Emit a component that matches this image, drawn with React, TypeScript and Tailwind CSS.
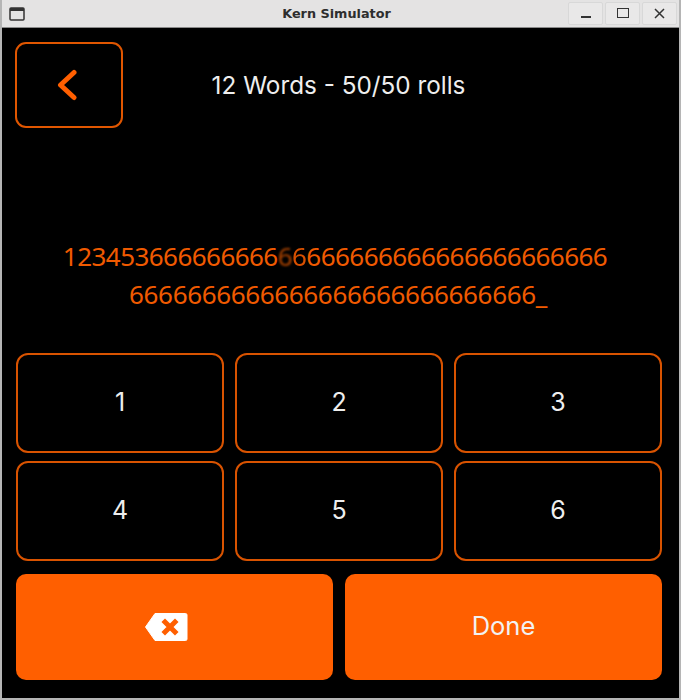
import React from "react";

const numbers = ["1", "2", "3", "4", "5", "6"];

function TitleBar() {
  return (
    <div className="h-[28px] shrink-0 grid grid-cols-[1fr_auto_1fr] items-center bg-[#e4e3e3] border-b border-[#8a8a8a]">
      <div className="pl-[7px] flex">
        <svg width="16" height="14" viewBox="0 0 16 14" fill="none">
          <rect x="1" y="1" width="14" height="12" rx="1" stroke="#333" strokeWidth="1.5" />
          <rect x="1" y="1" width="14" height="3" fill="#333" />
        </svg>
      </div>
      <div className="text-center text-[12.8px] font-bold text-[#2e2e2e] mr-[8px]" style={{ fontFamily: '"DejaVu Sans", sans-serif' }}>
        Kern Simulator
      </div>
      <div className="flex justify-end gap-[2px] pr-[2px] h-[23px] mb-[1px]">
        <div className="w-[35px] flex items-center justify-center bg-[#e9e8e8] border border-[#d8d8d8] rounded-[2px]">
          <div className="w-[10px] h-[2px] bg-[#333] mt-[8px]" />
        </div>
        <div className="w-[35px] flex items-center justify-center bg-[#e9e8e8] border border-[#d8d8d8] rounded-[2px]">
          <div className="w-[12px] h-[10px] border-[1.5px] border-[#333]" />
        </div>
        <div className="w-[35px] flex items-center justify-center bg-[#e9e8e8] border border-[#d8d8d8] rounded-[2px]">
          <svg width="11" height="11" viewBox="0 0 11 11" fill="none">
            <path d="M1 1L10 10M10 1L1 10" stroke="#333" strokeWidth="1.5" />
          </svg>
        </div>
      </div>
    </div>
  );
}

export default function App() {
  return (
    <div
      className="w-[681px] h-[700px] flex flex-col bg-black border-x-2 border-b-2 border-[#b5b5b5] overflow-hidden"
      style={{ fontFamily: '"Inter", "Noto Sans", sans-serif' }}
    >
      <TitleBar />
      <div className="flex-1 flex flex-col pl-[14px] pr-[17px] pt-[14px] pb-[18px] min-h-0">
        <div className="flex items-center h-[86px] shrink-0 -ml-px">
          <div className="w-[108px] h-[86px] flex items-center justify-center border-2 border-[#e05600] rounded-[11px]">
            <svg width="24" height="32" viewBox="0 0 24 32" fill="none">
              <path d="M17 3.5L3.5 16L17 28.5" stroke="#ff5f00" strokeWidth="5" strokeLinecap="round" strokeLinejoin="round" />
            </svg>
          </div>
          <div className="flex-1 text-center text-[24.3px] text-[#eeeeee] pr-[108px]">12 Words - 50/50 rolls</div>
        </div>
        <div
          className="flex-1 flex items-center justify-center text-center text-[26px] tracking-[-0.55px] leading-[38px] text-[#f05a00] pt-[68px]"
          style={{ fontFamily: '"Noto Sans", sans-serif' }}
        >
          <div>
            <div className="pr-[8px]">
              123453666666666
              <span className="text-[#a84200] blur-[0.8px]">6</span>
              <span className="text-[#d85000] blur-[0.4px]">6</span>
              666666666666666666666
            </div>
            <div className="pr-[2px] tracking-[-0.35px]">6666666666666666666666666666_</div>
          </div>
        </div>
        <div className="grid grid-cols-3 gap-x-[11px] gap-y-[8px] shrink-0">
          {numbers.map((n) => (
            <div
              key={n}
              className="h-[100px] flex items-center justify-center border-2 border-[#d95300] rounded-[12px] text-[25px] text-[#eeeeee]"
            >
              {n}
            </div>
          ))}
        </div>
        <div className="grid grid-cols-2 gap-[12px] mt-[13px] shrink-0">
          <div className="h-[106px] flex items-center justify-center bg-[#ff5f00] rounded-[10px]">
            <svg className="mr-[17px]" width="44" height="30" viewBox="0 0 44 30">
              <path d="M11 1.5H41.5a1.5 1.5 0 0 1 1.5 1.5V27a1.5 1.5 0 0 1-1.5 1.5H11L1.5 15Z" fill="#fff" stroke="#fff" strokeLinejoin="round" />
              <path d="M21 10L31 20M31 10L21 20" stroke="#ff5f00" strokeWidth="5" strokeLinecap="square" />
            </svg>
          </div>
          <div className="h-[106px] flex items-center justify-center bg-[#ff5f00] rounded-[10px] text-[25.5px] text-[#f2f2f2] pb-[2px]">Done</div>
        </div>
      </div>
    </div>
  );
}
